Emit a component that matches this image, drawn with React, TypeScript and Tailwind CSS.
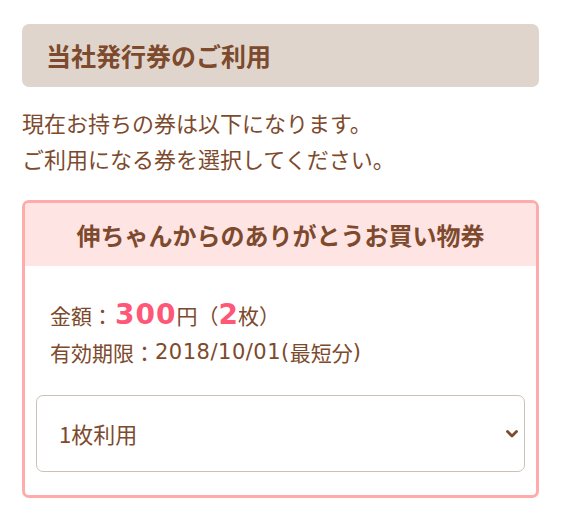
import React from "react";

export default function App() {
  const font = { fontFamily: '"Noto Sans CJK JP", "Noto Sans", sans-serif' };
  const latin = { fontFamily: '"DejaVu Sans", "Noto Sans CJK JP", sans-serif' };
  return (
    <div className="bg-white w-[561px] h-[523px] px-[22px] pt-[24px] text-[#7d4a2d]" style={font}>
      <div className="h-[63px] rounded-[7px] bg-[#e0d5cc] flex items-center pl-[24px]">
        <h2 className="text-[25px] font-bold leading-none text-[#7d4a2d]">当社発行券のご利用</h2>
      </div>
      <div className="mt-[17px] text-[22px] leading-[36px]">
        <p>現在お持ちの券は以下になります。</p>
        <p>ご利用になる券を選択してください。</p>
      </div>
      <div className="mt-[24px] border-[3px] border-[#ffabab] rounded-[7px] overflow-hidden">
        <div className="h-[63px] bg-[#ffe4e4] flex items-center justify-center">
          <h3 className="text-[24px] font-bold leading-none">伸ちゃんからのありがとうお買い物券</h3>
        </div>
        <div className="px-[11px] pt-[31px] pb-[23px]">
          <div className="pl-[14px]">
            <p className="h-[36px] flex items-center text-[21px] leading-none">
              <span>金額：</span>
              <span className="ml-[2px] text-[28px] font-bold text-[#ff5777] tracking-[1px]" style={latin}>300</span>
              <span>円（</span>
              <span className="text-[28px] font-bold text-[#ff5777]" style={latin}>2</span>
              <span>枚）</span>
            </p>
            <p className="mt-[1px] h-[36px] flex items-center text-[21px] leading-none">
              <span>有効期限：</span>
              <span className="tracking-[0.5px]" style={latin}>2018/10/01(</span>
              <span>最短分</span>
              <span style={latin}>)</span>
            </p>
          </div>
          <div className="relative mt-[25px]">
            <select
              className="appearance-none w-full h-[77px] border border-[#cdc0b4] rounded-[7px] bg-white pl-[22px] text-[22px] text-[#7d4a2d] outline-none"
              style={font}
              defaultValue="1"
            >
              <option value="1">1枚利用</option>
              <option value="2">2枚利用</option>
            </select>
            <svg
              className="absolute right-[7px] top-1/2 -translate-y-1/2 pointer-events-none"
              width="12"
              height="8"
              viewBox="0 0 12 8"
            >
              <path d="M1.5 1.5 L6 6 L10.5 1.5" fill="none" stroke="#7d4a2d" strokeWidth="2.8" strokeLinecap="round" strokeLinejoin="round" />
            </svg>
          </div>
        </div>
      </div>
    </div>
  );
}
